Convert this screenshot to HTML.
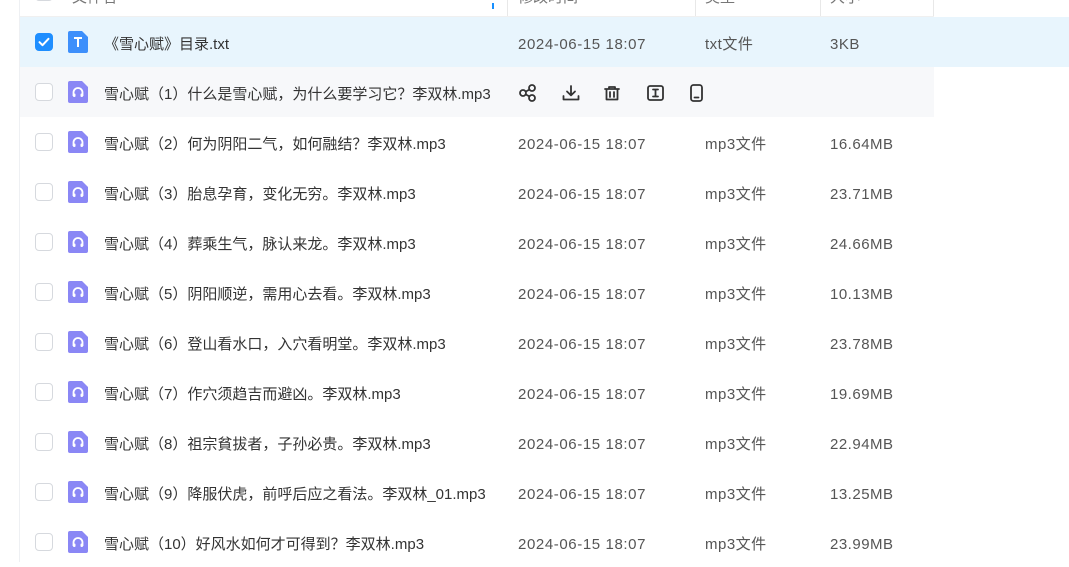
<!DOCTYPE html>
<html><head><meta charset="utf-8"><style>
*{margin:0;padding:0;box-sizing:border-box}
body{width:1069px;height:562px;overflow:hidden;background:#fff;font-family:"Liberation Sans","Noto Sans CJK SC",sans-serif;font-size:15px;color:#333;position:relative}
.vl{position:absolute;left:19px;top:0;width:1px;height:562px;background:#eef0f3}
.hdr{position:absolute;left:20px;top:-33px;width:914px;height:50px;border-bottom:1px solid #f0f0f0}
.hdr span{position:absolute;top:21px;color:#777;font-size:15px;line-height:20px}
.sep{position:absolute;top:33px;width:1px;height:16px;background:#e8e8e8}
.row{position:absolute;left:20px;height:50px;width:914px}
.row .cb{position:absolute;left:15px;top:16px;width:18px;height:18px;border:1px solid #d6d9de;border-radius:4px;background:#fff}
.row .ic{position:absolute;left:48px;top:14px;width:20px;height:22px}
.row .t{position:absolute;top:18px;line-height:20px;white-space:nowrap}
.n{left:84px;color:#333}.d{left:498px;color:#555;letter-spacing:0.6px}.ty{left:685px;color:#555;letter-spacing:0.5px}.s{left:810px;color:#555;letter-spacing:0.5px}
</style></head><body>
<div class="vl"></div>
<div class="hdr">
<div style="position:absolute;left:15px;top:16px;width:18px;height:18px;border:1px solid #d6d9de;border-radius:4px"></div>
<span style="left:52px">文件名</span>
<div style="position:absolute;left:472px;top:36px;width:2px;height:6px;background:#1890ff"></div>
<div class="sep" style="left:487px"></div><span style="left:498px">修改时间</span>
<div class="sep" style="left:675px"></div><span style="left:685px">类型</span>
<div class="sep" style="left:800px"></div><span style="left:810px">大小</span>
<div class="sep" style="left:913px"></div>
</div>

<div class="row" style="top:17px;width:1049px;background:#e8f5fd">
<div class="cb" style="background:#1e8eff;border-color:#1e8eff"><svg width="16" height="16" viewBox="0 0 16 16" style="position:absolute;left:0;top:0"><path d="M3.5 8.2l3 3 6-6.4" stroke="#fff" stroke-width="2" fill="none" stroke-linecap="round" stroke-linejoin="round"/></svg></div>
<svg class="ic" viewBox="0 0 20 22"><path d="M2 0h12l6 6v14a2 2 0 0 1-2 2H2a2 2 0 0 1-2-2V2a2 2 0 0 1 2-2z" fill="#3d8ffb"/><path d="M6 7h8M10 7v9" stroke="#fff" stroke-width="2"/></svg>
<div class="t n">《雪心赋》目录.txt</div><div class="t d">2024-06-15 18:07</div><div class="t ty">txt文件</div><div class="t s">3KB</div>
</div>

<div class="row" style="top:67px;background:#f7f8fa">
<div class="cb"></div>
<svg class="ic" viewBox="0 0 20 22"><path d="M2 0h12l6 6v14a2 2 0 0 1-2 2H2a2 2 0 0 1-2-2V2a2 2 0 0 1 2-2z" fill="#8a87f5"/><path d="M5.5 15v-3.5a4.5 4.5 0 0 1 9 0V15" stroke="#fff" stroke-width="1.8" fill="none"/><rect x="5" y="12.5" width="2.5" height="3.5" rx="1" fill="#fff"/><rect x="12.5" y="12.5" width="2.5" height="3.5" rx="1" fill="#fff"/></svg>
<div class="t n">雪心赋（1）什么是雪心赋，为什么要学习它？李双林.mp3</div>
<svg style="position:absolute;left:498px;top:16px" width="200" height="20" viewBox="0 0 200 20" fill="none" stroke="#333" stroke-width="1.8" stroke-linecap="round" stroke-linejoin="round">
<circle cx="5" cy="10" r="3"/><circle cx="14" cy="5" r="3"/><circle cx="14" cy="15" r="3"/><path d="M7.7 8.6l3.6-2M7.7 11.4l3.6 2"/>
<path d="M53 3v9M49 8.5l4 3.8 4-3.8M45.5 13v3.5h15V13"/>
<path d="M87 6h14M91 6V4h6v2M88.5 6v10.5h11V6M92 9v5M96 9v5"/>
<rect x="130" y="3" width="15" height="14" rx="2"/><path d="M135 6.5h5M137.5 6.5v7M135 13.5h5"/>
<rect x="173" y="2" width="11" height="16" rx="2.5"/><path d="M176.5 14.5h4"/>
</svg>
</div>

<div class="row" style="top:117px"><div class="cb"></div><svg class="ic" viewBox="0 0 20 22"><path d="M2 0h12l6 6v14a2 2 0 0 1-2 2H2a2 2 0 0 1-2-2V2a2 2 0 0 1 2-2z" fill="#8a87f5"/><path d="M5.5 15v-3.5a4.5 4.5 0 0 1 9 0V15" stroke="#fff" stroke-width="1.8" fill="none"/><rect x="5" y="12.5" width="2.5" height="3.5" rx="1" fill="#fff"/><rect x="12.5" y="12.5" width="2.5" height="3.5" rx="1" fill="#fff"/></svg><div class="t n">雪心赋（2）何为阴阳二气，如何融结？李双林.mp3</div><div class="t d">2024-06-15 18:07</div><div class="t ty">mp3文件</div><div class="t s">16.64MB</div></div>
<div class="row" style="top:167px"><div class="cb"></div><svg class="ic" viewBox="0 0 20 22"><path d="M2 0h12l6 6v14a2 2 0 0 1-2 2H2a2 2 0 0 1-2-2V2a2 2 0 0 1 2-2z" fill="#8a87f5"/><path d="M5.5 15v-3.5a4.5 4.5 0 0 1 9 0V15" stroke="#fff" stroke-width="1.8" fill="none"/><rect x="5" y="12.5" width="2.5" height="3.5" rx="1" fill="#fff"/><rect x="12.5" y="12.5" width="2.5" height="3.5" rx="1" fill="#fff"/></svg><div class="t n">雪心赋（3）胎息孕育，变化无穷。李双林.mp3</div><div class="t d">2024-06-15 18:07</div><div class="t ty">mp3文件</div><div class="t s">23.71MB</div></div>
<div class="row" style="top:217px"><div class="cb"></div><svg class="ic" viewBox="0 0 20 22"><path d="M2 0h12l6 6v14a2 2 0 0 1-2 2H2a2 2 0 0 1-2-2V2a2 2 0 0 1 2-2z" fill="#8a87f5"/><path d="M5.5 15v-3.5a4.5 4.5 0 0 1 9 0V15" stroke="#fff" stroke-width="1.8" fill="none"/><rect x="5" y="12.5" width="2.5" height="3.5" rx="1" fill="#fff"/><rect x="12.5" y="12.5" width="2.5" height="3.5" rx="1" fill="#fff"/></svg><div class="t n">雪心赋（4）葬乘生气，脉认来龙。李双林.mp3</div><div class="t d">2024-06-15 18:07</div><div class="t ty">mp3文件</div><div class="t s">24.66MB</div></div>
<div class="row" style="top:267px"><div class="cb"></div><svg class="ic" viewBox="0 0 20 22"><path d="M2 0h12l6 6v14a2 2 0 0 1-2 2H2a2 2 0 0 1-2-2V2a2 2 0 0 1 2-2z" fill="#8a87f5"/><path d="M5.5 15v-3.5a4.5 4.5 0 0 1 9 0V15" stroke="#fff" stroke-width="1.8" fill="none"/><rect x="5" y="12.5" width="2.5" height="3.5" rx="1" fill="#fff"/><rect x="12.5" y="12.5" width="2.5" height="3.5" rx="1" fill="#fff"/></svg><div class="t n">雪心赋（5）阴阳顺逆，需用心去看。李双林.mp3</div><div class="t d">2024-06-15 18:07</div><div class="t ty">mp3文件</div><div class="t s">10.13MB</div></div>
<div class="row" style="top:317px"><div class="cb"></div><svg class="ic" viewBox="0 0 20 22"><path d="M2 0h12l6 6v14a2 2 0 0 1-2 2H2a2 2 0 0 1-2-2V2a2 2 0 0 1 2-2z" fill="#8a87f5"/><path d="M5.5 15v-3.5a4.5 4.5 0 0 1 9 0V15" stroke="#fff" stroke-width="1.8" fill="none"/><rect x="5" y="12.5" width="2.5" height="3.5" rx="1" fill="#fff"/><rect x="12.5" y="12.5" width="2.5" height="3.5" rx="1" fill="#fff"/></svg><div class="t n">雪心赋（6）登山看水口，入穴看明堂。李双林.mp3</div><div class="t d">2024-06-15 18:07</div><div class="t ty">mp3文件</div><div class="t s">23.78MB</div></div>
<div class="row" style="top:367px"><div class="cb"></div><svg class="ic" viewBox="0 0 20 22"><path d="M2 0h12l6 6v14a2 2 0 0 1-2 2H2a2 2 0 0 1-2-2V2a2 2 0 0 1 2-2z" fill="#8a87f5"/><path d="M5.5 15v-3.5a4.5 4.5 0 0 1 9 0V15" stroke="#fff" stroke-width="1.8" fill="none"/><rect x="5" y="12.5" width="2.5" height="3.5" rx="1" fill="#fff"/><rect x="12.5" y="12.5" width="2.5" height="3.5" rx="1" fill="#fff"/></svg><div class="t n">雪心赋（7）作穴须趋吉而避凶。李双林.mp3</div><div class="t d">2024-06-15 18:07</div><div class="t ty">mp3文件</div><div class="t s">19.69MB</div></div>
<div class="row" style="top:417px"><div class="cb"></div><svg class="ic" viewBox="0 0 20 22"><path d="M2 0h12l6 6v14a2 2 0 0 1-2 2H2a2 2 0 0 1-2-2V2a2 2 0 0 1 2-2z" fill="#8a87f5"/><path d="M5.5 15v-3.5a4.5 4.5 0 0 1 9 0V15" stroke="#fff" stroke-width="1.8" fill="none"/><rect x="5" y="12.5" width="2.5" height="3.5" rx="1" fill="#fff"/><rect x="12.5" y="12.5" width="2.5" height="3.5" rx="1" fill="#fff"/></svg><div class="t n">雪心赋（8）祖宗貧拔者，子孙必贵。李双林.mp3</div><div class="t d">2024-06-15 18:07</div><div class="t ty">mp3文件</div><div class="t s">22.94MB</div></div>
<div class="row" style="top:467px"><div class="cb"></div><svg class="ic" viewBox="0 0 20 22"><path d="M2 0h12l6 6v14a2 2 0 0 1-2 2H2a2 2 0 0 1-2-2V2a2 2 0 0 1 2-2z" fill="#8a87f5"/><path d="M5.5 15v-3.5a4.5 4.5 0 0 1 9 0V15" stroke="#fff" stroke-width="1.8" fill="none"/><rect x="5" y="12.5" width="2.5" height="3.5" rx="1" fill="#fff"/><rect x="12.5" y="12.5" width="2.5" height="3.5" rx="1" fill="#fff"/></svg><div class="t n">雪心赋（9）降服伏虎，前呼后应之看法。李双林_01.mp3</div><div class="t d">2024-06-15 18:07</div><div class="t ty">mp3文件</div><div class="t s">13.25MB</div></div>
<div class="row" style="top:517px"><div class="cb"></div><svg class="ic" viewBox="0 0 20 22"><path d="M2 0h12l6 6v14a2 2 0 0 1-2 2H2a2 2 0 0 1-2-2V2a2 2 0 0 1 2-2z" fill="#8a87f5"/><path d="M5.5 15v-3.5a4.5 4.5 0 0 1 9 0V15" stroke="#fff" stroke-width="1.8" fill="none"/><rect x="5" y="12.5" width="2.5" height="3.5" rx="1" fill="#fff"/><rect x="12.5" y="12.5" width="2.5" height="3.5" rx="1" fill="#fff"/></svg><div class="t n">雪心赋（10）好风水如何才可得到？李双林.mp3</div><div class="t d">2024-06-15 18:07</div><div class="t ty">mp3文件</div><div class="t s">23.99MB</div></div>
</body></html>
